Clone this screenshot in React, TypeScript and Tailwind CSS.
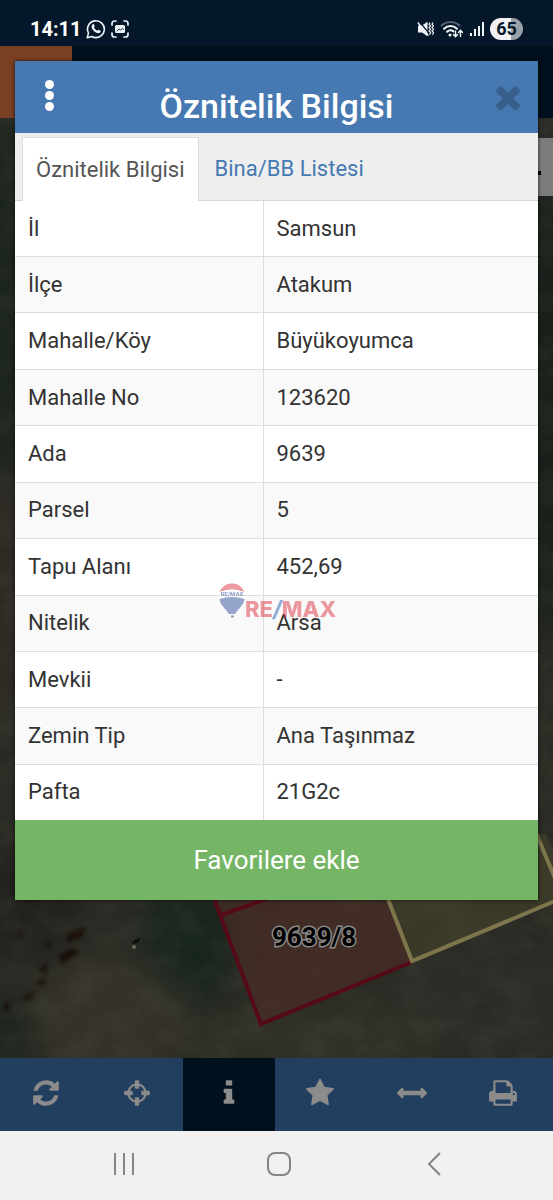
import React from "react";

const rows = [
  ["İl", "Samsun"],
  ["İlçe", "Atakum"],
  ["Mahalle/Köy", "Büyükoyumca"],
  ["Mahalle No", "123620"],
  ["Ada", "9639"],
  ["Parsel", "5"],
  ["Tapu Alanı", "452,69"],
  ["Nitelik", "Arsa"],
  ["Mevkii", "-"],
  ["Zemin Tip", "Ana Taşınmaz"],
  ["Pafta", "21G2c"],
];

const tools = [
  {
    name: "Yenile",
    path: "M1639 1056q0 5-1 7-64 268-268 434.5t-478 166.5q-146 0-282.5-55t-243.5-157l-129 129q-19 19-45 19t-45-19-19-45v-448q0-26 19-45t45-19h448q26 0 45 19t19 45-19 45l-137 137q71 66 161 102t187 36q134 0 250-65t186-179q11-17 53-117 8-23 30-23h192q13 0 22.5 9.5t9.5 22.5zm25-800v448q0 26-19 45t-45 19h-448q-26 0-45-19t-19-45 19-45l138-138q-148-137-349-137-134 0-250 65t-186 179q-11 17-53 117-8 23-30 23h-199q-13 0-22.5-9.5t-9.5-22.5v-7q65-268 270-434.5t480-166.5q146 0 284 55.5t245 156.5l130-129q19-19 45-19t45 19 19 45z",
  },
  {
    name: "Konum",
    path: "M1325 1024h-109q-26 0-45-19t-19-45v-128q0-26 19-45t45-19h109q-32-108-112.5-188.5t-188.5-112.5v109q0 26-19 45t-45 19h-128q-26 0-45-19t-19-45v-109q-108 32-188.5 112.5t-112.5 188.5h109q26 0 45 19t19 45v128q0 26-19 45t-45 19h-109q32 108 112.5 188.5t188.5 112.5v-109q0-26 19-45t45-19h128q26 0 45 19t19 45v109q108-32 188.5-112.5t112.5-188.5zm339-192v128q0 26-19 45t-45 19h-143q-37 161-154.5 278.5t-278.5 154.5v143q0 26-19 45t-45 19h-128q-26 0-45-19t-19-45v-143q-161-37-278.5-154.5t-154.5-278.5h-143q-26 0-45-19t-19-45v-128q0-26 19-45t45-19h143q37-161 154.5-278.5t278.5-154.5v-143q0-26 19-45t45-19h128q26 0 45 19t19 45v143q161 37 278.5 154.5t154.5 278.5h143q26 0 45 19t19 45z",
  },
  {
    name: "Bilgi",
    active: true,
    path: "M1216 1344v128q0 26-19 45t-45 19h-512q-26 0-45-19t-19-45v-128q0-26 19-45t45-19h64v-384h-64q-26 0-45-19t-19-45v-128q0-26 19-45t45-19h384q26 0 45 19t19 45v576h64q26 0 45 19t19 45zm-128-1152v192q0 26-19 45t-45 19h-256q-26 0-45-19t-19-45v-192q0-26 19-45t45-19h256q26 0 45 19t19 45z",
  },
  {
    name: "Favoriler",
    path: "M1728 647q0 22-26 48l-363 354 86 500q1 7 1 20 0 21-10.5 35.5t-30.5 14.5q-19 0-40-12l-449-236-449 236q-22 12-40 12-21 0-31.5-14.5t-10.5-35.5q0-6 2-20l86-500-364-354q-25-27-25-48 0-37 56-46l502-73 225-455q19-41 49-41t49 41l225 455 502 73q56 9 56 46z",
  },
  {
    name: "Ölçüm",
    path: "M1792 896q0 26-19 45l-256 256q-19 19-45 19t-45-19-19-45v-128h-1024v128q0 26-19 45t-45 19-45-19l-256-256q-19-19-19-45t19-45l256-256q19-19 45-19t45 19 19 45v128h1024v-128q0-26 19-45t45-19 45 19l256 256q19 19 19 45z",
  },
  {
    name: "Yazdır",
    path: "M448 1536h896v-256h-896v256zm0-640h896v-384h-160q-40 0-68-28t-28-68v-160h-640v640zm1152 64q0-26-19-45t-45-19-45 19-19 45 19 45 45 19 45-19 19-45zm128 0v416q0 13-9.5 22.5t-22.5 9.5h-224v160q0 40-28 68t-68 28h-960q-40 0-68-28t-28-68v-160h-224q-13 0-22.5-9.5t-9.5-22.5v-416q0-79 56.5-135.5t135.5-56.5h64v-544q0-40 28-68t68-28h672q40 0 88 20t76 48l152 152q28 28 48 76t20 88v256h64q79 0 135.5 56.5t56.5 135.5z",
  },
];

function StatusBar() {
  return (
    <div className="flex h-[46px] items-center justify-between bg-[#05172b] px-[30px] pt-3 text-white">
      <div className="flex items-center gap-1">
        <span className="text-xl font-bold">14:11</span>
        <div className="flex items-center gap-1">
          {/* whatsapp */}
          <svg className="size-5" viewBox="0 0 20 20" fill="none" stroke="#eef3f8" strokeWidth="1.6">
            <path d="M1.2 18.8l1.3-4.7A8.4 8.4 0 1 1 5.8 17.5z" strokeLinejoin="round" />
            <path
              d="M6.4 5.4c.5-.5 1.2-.5 1.5.1l.8 1.7c.2.5-.6 1-.7 1.4.6 1.3 1.7 2.4 3.2 3.1.4 0 .9-1.1 1.4-.9l1.8.9c.5.3.3 1.3-.2 1.8-1.1 1.1-2.7.9-4.4 0-1.8-.9-3.4-2.7-4-4.4-.4-1.4-.2-2.9.6-3.7z"
              fill="#eef3f8"
              stroke="none"
            />
          </svg>
          {/* screenshot */}
          <svg className="size-5" viewBox="0 0 20 20" fill="none" stroke="#eef3f8" strokeWidth="1.7" strokeLinecap="round">
            <path d="M2 6V4.500A2.500 2.500 0 0 1 4.500 2H6M14 2h1.500A2.500 2.500 0 0 1 18 4.500V6M18 14v1.500a2.500 2.500 0 0 1-2.500 2.500H14M6 18H4.500A2.500 2.500 0 0 1 2 15.500V14" />
            <rect x="5" y="6" width="10" height="8" rx="1.5" fill="#eef3f8" stroke="none" />
            <path d="M7 12l2-2 1.600 1 1.700-1.500 1.200 1" stroke="#05172b" strokeWidth="0.9" />
          </svg>
        </div>
      </div>
      <div className="flex items-center gap-[6px]">
        {/* muted */}
        <svg className="h-4 w-[17px]" viewBox="0 0 17 16" fill="#f2f5f8">
          <path d="M1 4.500h4L10.500.8v14.400L5 11.500H1z" />
          <path d="M2 0l11 13.500" stroke="#05172b" strokeWidth="1.2" />
          <path d="M.8 1.500l10.500 13" stroke="#f2f5f8" strokeWidth="1.4" />
          <path
            d="M13 1.500l-1 1.700 1.600 1.700-1.600 1.700 1.600 1.700-1.600 1.700 1.600 1.700-1 2M16 1.500l-1 1.700 1.500 1.700-1.500 1.700 1.500 1.700-1.500 1.700 1.500 1.700-1 2"
            fill="none"
            stroke="#f2f5f8"
            strokeWidth="1.2"
          />
        </svg>
        {/* wifi */}
        <svg className="h-[18px] w-6" viewBox="0 0 24 18" fill="none" strokeLinecap="round">
          <path d="M1.500 5.500a13 13 0 0 1 18 0" stroke="#52606f" strokeWidth="2" />
          <path d="M4 8.700a9.400 9.400 0 0 1 13 0" stroke="#f2f5f8" strokeWidth="2" />
          <path d="M7 11.800a5.200 5.200 0 0 1 6.500-.4" stroke="#f2f5f8" strokeWidth="2" />
          <circle cx="10" cy="15" r="1.5" fill="#f2f5f8" />
          <path d="M15.500 11v5.500M13.500 14.500l2 2.200 2-2.200M20.500 16.500v-6M18.500 12.500l2-2.200 2 2.200" stroke="#f2f5f8" strokeWidth="1.4" />
        </svg>
        {/* signal */}
        <svg className="h-4 w-[14px]" viewBox="0 0 14 16" fill="#f2f5f8">
          <rect x="0" y="12" width="2" height="3" />
          <rect x="4" y="8" width="2" height="7" />
          <rect x="8" y="5" width="2" height="10" />
          <rect x="12" y="1" width="2" height="14" />
        </svg>
        <span className="flex h-[22px] w-[33px] items-center justify-center rounded-full bg-linear-to-r from-[#f1f1f3] from-65% to-[#9aa0a8] to-65% text-lg font-bold text-[#05172b]">
          65
        </span>
      </div>
    </div>
  );
}

function MapView() {
  return (
    <svg
      className="absolute inset-0 size-full bg-[#2b2b25]"
      viewBox="0 0 553 940"
      preserveAspectRatio="xMidYMin slice"
    >
      <defs>
        <filter id="soft" x="-50%" y="-50%" width="200%" height="200%" colorInterpolationFilters="sRGB">
          <feGaussianBlur stdDeviation="18" />
        </filter>
        <filter id="spots" x="-20%" y="-20%" width="140%" height="140%" colorInterpolationFilters="sRGB">
          <feGaussianBlur stdDeviation="2" />
        </filter>
        <filter id="grain" x="0" y="0" width="100%" height="100%" colorInterpolationFilters="sRGB">
          <feTurbulence type="fractalNoise" baseFrequency="0.03 0.04" numOctaves="5" seed="7" />
          <feColorMatrix values="0 0 0 0 0.4  0 0 0 0 0.4  0 0 0 0 0.34  1.6 0 0 0 -0.6" />
        </filter>
      </defs>
      <g filter="url(#soft)">
        <ellipse cx="0" cy="180" rx="50" ry="180" fill="#1b241d" />
        <ellipse cx="0" cy="480" rx="40" ry="120" fill="#2e2a24" />
        <ellipse cx="553" cy="260" rx="50" ry="260" fill="#1a211b" />
        <ellipse cx="190" cy="820" rx="46" ry="70" fill="#17251c" />
        <ellipse cx="110" cy="900" rx="80" ry="60" fill="#35322a" />
        <ellipse cx="20" cy="790" rx="60" ry="50" fill="#20211c" />
        <ellipse cx="0" cy="915" rx="30" ry="40" fill="#1b241d" />
        <ellipse cx="320" cy="920" rx="120" ry="30" fill="#323127" />
        <ellipse cx="480" cy="880" rx="80" ry="40" fill="#2a2d27" />
      </g>
      <g filter="url(#spots)" fill="#1a0f0b">
        <path d="M66 816l20-8-4 12-14 6zM58 838l14-8 8 4-18 12zM38 852l10-9-2 12zM34 866l12-8-2 10zM20 880l16-8-6 12zM2 888l8-6-2 14zM14 818l8-5 1 5zM44 828l8-5-2 8z" />
      </g>
      <path d="M0 0h553v940H0z" filter="url(#grain)" opacity="0.2" />
      <path d="M132 826q2-6 9-6l-3 5z" fill="#0d1110" />
      <circle cx="134" cy="829" r="2" fill="#6b695c" />
      <path d="M208 765l53 141 151-62-26-68z" fill="#4b2d24" opacity="0.65" />
      <path d="M386 776l26 67 160-67-26-60-130-10z" fill="#49452a" opacity="0.5" />
      <g fill="none" strokeWidth="4">
        <path d="M208 765l53 141 151-62M219 798l50-18" stroke="#560a19" />
        <path d="M386 776l26 67 160-67M533 708l32 76" stroke="#7d764c" />
      </g>
      <text
        x="314"
        y="828"
        textAnchor="middle"
        className="fill-black stroke-[#8a8a88] stroke-3 text-[26px] font-bold [paint-order:stroke]"
      >
        9639/8
      </text>
    </svg>
  );
}

function Watermark() {
  return (
    <div className="pointer-events-none absolute top-[520px] left-[204px] flex items-center opacity-45">
      <svg className="h-9 w-[26px]" viewBox="0 0 26 36">
        <path d="M.5 9C3 3 8 .5 13 .5S23 3 25.500 9Q13 4 .5 9z" fill="#d9202e" />
        <path d="M.5 9Q13 4 25.500 9v7Q13 11 .5 16z" fill="#fff" />
        <text x="13" y="13" textAnchor="middle" className="fill-[#1c3f94] text-[6px] font-black">
          RE/MAX
        </text>
        <path d="M.5 16Q13 12 25.500 16C25 22 19 26 16 31h-6C7 26 1 22 .5 16z" fill="#1c3f94" />
        <path d="M12 32.500h3v2h-3z" fill="#333" />
      </svg>
      <span className="pt-4 font-[Inter] text-[22px] leading-6 font-extrabold text-[#d9202e]">
        RE<span className="text-[#1857b0] italic">/</span>MAX
      </span>
    </div>
  );
}

function InfoDialog() {
  return (
    <div
      role="dialog"
      aria-labelledby="dialog-title"
      className="absolute inset-x-[15px] top-[61px] bg-white shadow-[0_0_4px_rgba(0,0,0,0.7)]"
    >
      <div className="flex h-[72px] justify-between bg-[#4679b2] px-3">
        <button aria-label="Menü" className="flex w-9 flex-col items-center gap-[2px] pt-[19px] pl-2">
          <span className="size-[9px] rounded-full bg-white" />
          <span className="size-[9px] rounded-full bg-white" />
          <span className="size-[9px] rounded-full bg-white" />
        </button>
        <h1 id="dialog-title" className="pt-5 text-[34px] leading-[50px] font-medium text-white">
          Öznitelik Bilgisi
        </h1>
        <button aria-label="Kapat" className="w-9">
          <svg className="size-9" viewBox="0 0 1792 1792">
            <path
              fill="#385f8a"
              d="M1490 1322q0 40-28 68l-136 136q-28 28-68 28t-68-28l-294-294-294 294q-28 28-68 28t-68-28l-136-136q-28-28-28-68t28-68l294-294-294-294q-28-28-28-68t28-68l136-136q28-28 68-28t68 28l294 294 294-294q28-28 68-28t68 28l136 136q28 28 28 68t-28 68l-294 294 294 294q28 28 28 68z"
            />
          </svg>
        </button>
      </div>
      <div role="tablist" className="flex h-[68px] border-b border-[#d5d5d5] bg-[#eee] pt-1 pl-[7px] text-[22px]">
        <button role="tab" aria-selected="true" className="-mb-px border border-b-0 border-[#ddd] bg-white px-[13px] text-[#555]">
          Öznitelik Bilgisi
        </button>
        <button role="tab" aria-selected="false" className="px-4 text-[#4679b2]">
          Bina/BB Listesi
        </button>
      </div>
      <table className="h-[619px] w-full table-fixed border-collapse text-left text-[22px] leading-8 text-[#333]">
        <tbody>
          {rows.map(([label, value]) => (
            <tr key={label} className="border-b border-[#ddd] even:bg-[#f9f9f9] last:border-b-0">
              <th className="w-[248px] border-r border-[#ddd] px-[13px] font-normal">{label}</th>
              <td className="px-[13px]">{value}</td>
            </tr>
          ))}
        </tbody>
      </table>
      <button className="block h-20 w-full bg-[#75b666] text-[26px] text-white">Favorilere ekle</button>
      <Watermark />
    </div>
  );
}

export default function App() {
  return (
    <div className="relative flex min-h-screen flex-col font-[Roboto,sans-serif]">
      <StatusBar />
      <header className="h-[72px] bg-[#00101c]">
        <div className="size-[72px] bg-[#7a4023]" />
      </header>
      <main className="relative flex-1">
        <MapView />
        <div className="absolute top-5 right-0 flex h-[58px] w-10 items-center justify-end bg-[#7c7c7c] pt-3 pr-3">
          <span className="size-1 bg-black" />
        </div>
      </main>
      <nav className="grid h-[73px] grid-cols-6 bg-[#233f5f] pr-1">
        {tools.map((tool) => (
          <button
            key={tool.name}
            aria-label={tool.name}
            className={`flex items-center justify-center pb-1 ${tool.active ? "bg-[#00101c]" : ""}`}
          >
            <svg className="size-[30px]" viewBox="0 0 1792 1792" fill="#8b8b8b">
              <path d={tool.path} />
            </svg>
          </button>
        ))}
      </nav>
      <footer className="grid h-[69px] grid-cols-3 bg-[#f1f1f1] pr-[42px] pb-1 pl-[46px]">
        <button aria-label="Son uygulamalar" className="flex items-center justify-center">
          <svg className="size-6" viewBox="0 0 24 24" stroke="#858585" strokeWidth="2">
            <path d="M3 1v22M12 1v22M21 1v22" />
          </svg>
        </button>
        <button aria-label="Ana ekran" className="flex items-center justify-center">
          <svg className="size-6" viewBox="0 0 24 24" fill="none" stroke="#858585" strokeWidth="2">
            <rect x="1" y="1" width="22" height="22" rx="7" />
          </svg>
        </button>
        <button aria-label="Geri" className="flex items-center justify-center">
          <svg className="size-6" viewBox="0 0 24 24" fill="none" stroke="#858585" strokeWidth="2">
            <path d="M18 1L7 12l11 11" />
          </svg>
        </button>
      </footer>
      <InfoDialog />
    </div>
  );
}
